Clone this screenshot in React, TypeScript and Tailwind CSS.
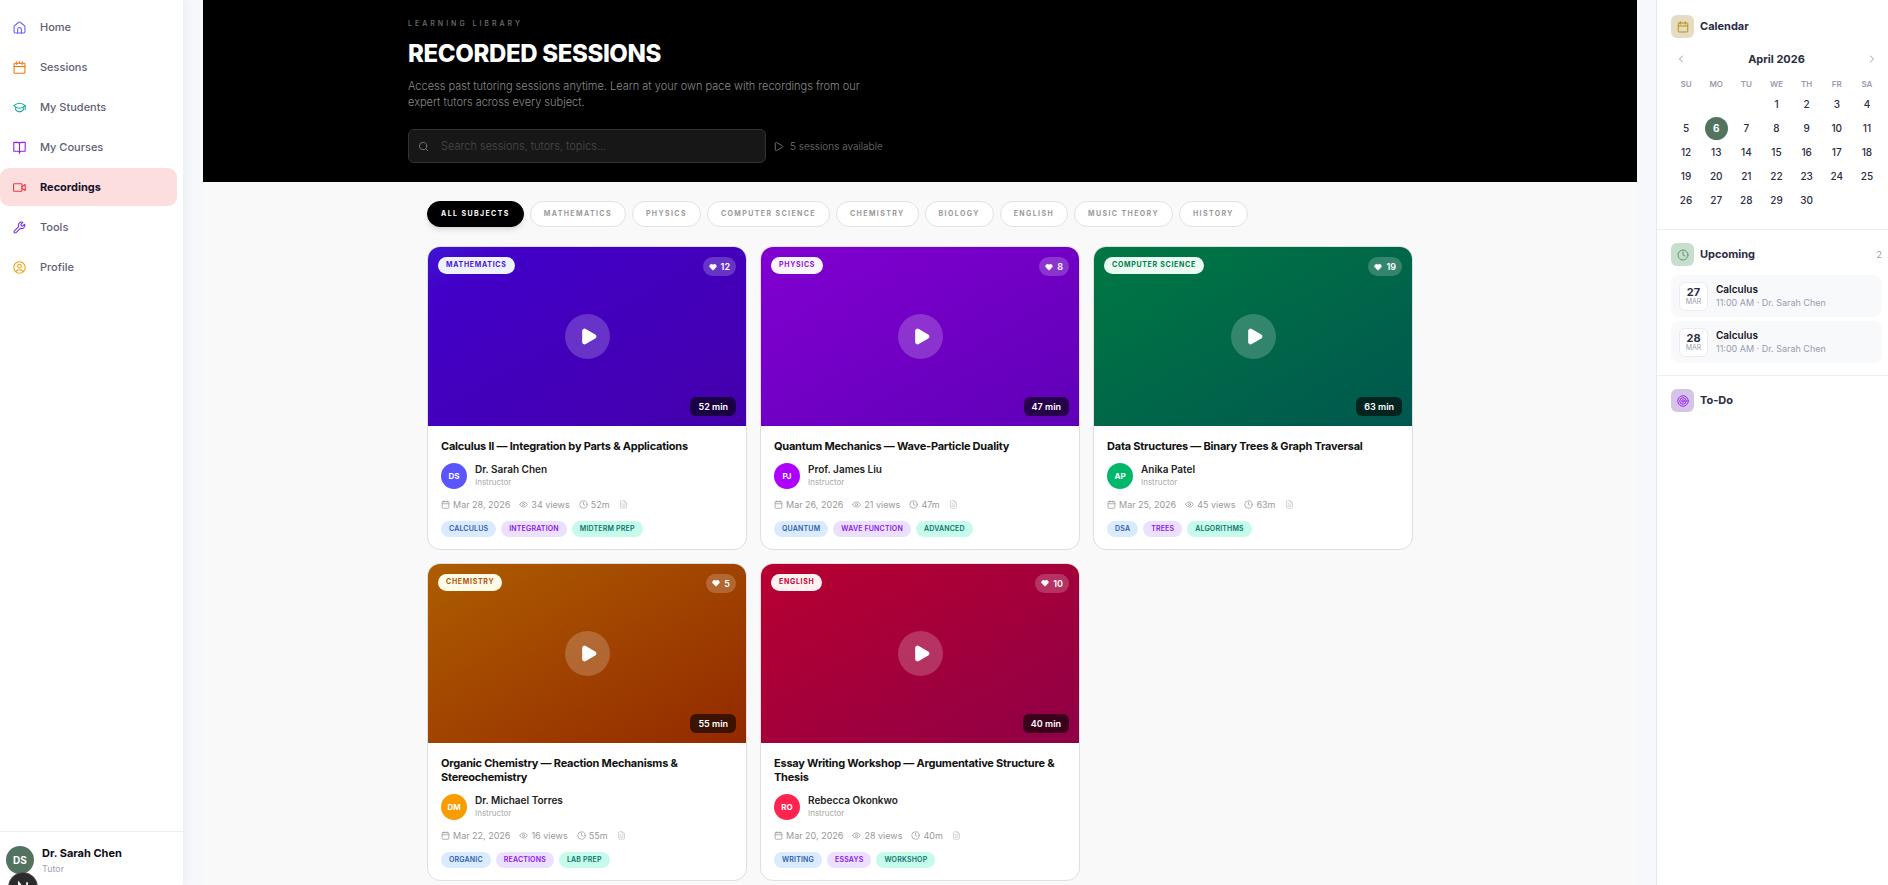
import { useState, type ReactNode } from "react";
import {
  Calendar,
  ChevronLeft,
  ChevronRight,
  Clock,
  Eye,
  FileText,
  Heart,
  Play,
  Search,
  Wrench,
} from "lucide-react";
import clsx from "clsx";

const LineIcon = ({ size = 13, children }: { size?: number; children: ReactNode }) => (
  <svg
    width={size}
    height={size}
    viewBox="0 0 24 24"
    fill="none"
    stroke="currentColor"
    strokeWidth={2}
    strokeLinecap="round"
    strokeLinejoin="round"
    aria-hidden="true"
  >
    {children}
  </svg>
);

const navItems = [
  {
    name: "Home",
    color: "text-[#615fff]",
    icon: (
      <LineIcon>
        <path d="M2 9.500 10 2.700a3 3 0 0 1 4 0L22 9.500V20a2 2 0 0 1-2 2H4a2 2 0 0 1-2-2z" />
        <path d="M8.500 22v-6.500a3.500 3.500 0 0 1 7 0V22" />
      </LineIcon>
    ),
  },
  {
    name: "Sessions",
    color: "text-[#f5740a]",
    icon: (
      <LineIcon>
        <rect x="2" y="4" width="20" height="18.500" rx="1.500" />
        <path d="M2 10h20M7 1.500v5M17 1.500v5M12 1.500v2.500" />
      </LineIcon>
    ),
  },
  {
    name: "My Students",
    color: "text-[#14a898]",
    icon: (
      <LineIcon>
        <path d="M1.500 8.500C5 5.500 8.500 4 12 4s7 1.500 10.500 4.500C19 11.500 15.500 13.500 12 13.500S5 11.500 1.500 8.500z" />
        <path d="M5 12v4.500c2 2.500 4.500 3.500 7 3.500s5-1 7-3.500V12" />
        <path d="M22.500 8.500V16" />
      </LineIcon>
    ),
  },
  {
    name: "My Courses",
    color: "text-[#8f22f0]",
    icon: (
      <LineIcon>
        <path d="M12 5v17" />
        <path d="M1.500 2.500H9a3 3 0 0 1 3 3 3 3 0 0 1 3-3h7.500v16.500H15a3 3 0 0 0-3 3 3 3 0 0 0-3-3H1.500z" />
      </LineIcon>
    ),
  },
  {
    name: "Recordings",
    color: "text-[#ea3b3b]",
    icon: (
      <LineIcon>
        <rect x="1" y="5" width="15.500" height="14" rx="1.500" />
        <path d="m16.500 10.500 6-4v11l-6-4" />
      </LineIcon>
    ),
  },
  { name: "Tools", color: "text-[#7530e8]", icon: <Wrench size={13} /> },
  {
    name: "Profile",
    color: "text-[#eaa30c]",
    icon: (
      <LineIcon>
        <circle cx="12" cy="12" r="10.500" />
        <circle cx="12" cy="9.500" r="3.500" />
        <path d="M5.500 19.500c1-2.500 3-3.500 6.500-3.500s5.500 1 6.500 3.500" />
      </LineIcon>
    ),
  },
];

const subjects = [
  "All Subjects",
  "Mathematics",
  "Physics",
  "Computer Science",
  "Chemistry",
  "Biology",
  "English",
  "Music Theory",
  "History",
];

const sessions = [
  {
    title: "Calculus II — Integration by Parts & Applications",
    subject: "Mathematics",
    tutor: "Dr. Sarah Chen",
    initials: "DS",
    date: "Mar 28, 2026",
    views: 34,
    minutes: 52,
    likes: 12,
    tags: ["Calculus", "Integration", "Midterm Prep"],
    thumb: "bg-[linear-gradient(150deg,#4015d4_0%,#4200c8_14%,#4300b8_60%,#4500ab_100%)]",
    badge: "bg-[#eef2ff] text-[#4a12d8]",
    avatar: "bg-[#5b55ff]",
  },
  {
    title: "Quantum Mechanics — Wave-Particle Duality",
    subject: "Physics",
    tutor: "Prof. James Liu",
    initials: "PJ",
    date: "Mar 26, 2026",
    views: 21,
    minutes: 47,
    likes: 8,
    tags: ["Quantum", "Wave Function", "Advanced"],
    thumb: "bg-[linear-gradient(150deg,#8200d0,#5f00b8)]",
    badge: "bg-[#faf5ff] text-[#8a0fdb]",
    avatar: "bg-[#ad00ff]",
  },
  {
    title: "Data Structures — Binary Trees & Graph Traversal",
    subject: "Computer Science",
    tutor: "Anika Patel",
    initials: "AP",
    date: "Mar 25, 2026",
    views: 45,
    minutes: 63,
    likes: 19,
    tags: ["DSA", "Trees", "Algorithms"],
    thumb: "bg-[linear-gradient(150deg,#007842,#00574f)]",
    badge: "bg-[#e9fdf2] text-[#007a4d]",
    avatar: "bg-[#00b869]",
  },
  {
    title: "Organic Chemistry — Reaction Mechanisms & Stereochemistry",
    subject: "Chemistry",
    tutor: "Dr. Michael Torres",
    initials: "DM",
    date: "Mar 22, 2026",
    views: 16,
    minutes: 55,
    likes: 5,
    tags: ["Organic", "Reactions", "Lab Prep"],
    thumb: "bg-[linear-gradient(150deg,#ad5d00,#932900)]",
    badge: "bg-[#fffbe6] text-[#b4530a]",
    avatar: "bg-[#f89c00]",
  },
  {
    title: "Essay Writing Workshop — Argumentative Structure & Thesis",
    subject: "English",
    tutor: "Rebecca Okonkwo",
    initials: "RO",
    date: "Mar 20, 2026",
    views: 28,
    minutes: 40,
    likes: 10,
    tags: ["Writing", "Essays", "Workshop"],
    thumb: "bg-[linear-gradient(150deg,#b80030,#8f0046)]",
    badge: "bg-[#fff1f2] text-[#c70036]",
    avatar: "bg-[#ff2350]",
  },
];

const tagColors = [
  "bg-[#dbebff] text-[#2f5fae]",
  "bg-[#ebe1fe] text-[#8b14ee]",
  "bg-[#c6fbec] text-[#0b756b]",
];

const weekDays = ["SU", "MO", "TU", "WE", "TH", "FR", "SA"];
const weeks = [
  [null, null, null, 1, 2, 3, 4],
  [5, 6, 7, 8, 9, 10, 11],
  [12, 13, 14, 15, 16, 17, 18],
  [19, 20, 21, 22, 23, 24, 25],
  [26, 27, 28, 29, 30, null, null],
];

const upcoming = [
  { day: 27, month: "MAR", title: "Calculus", info: "11:00 AM · Dr. Sarah Chen" },
  { day: 28, month: "MAR", title: "Calculus", info: "11:00 AM · Dr. Sarah Chen" },
];

const Sidebar = () => (
  <aside className="relative z-10 flex w-[183px] shrink-0 flex-col bg-white shadow-[0_0_12px_rgba(30,40,90,0.08)]">
    <nav className="flex flex-1 flex-col gap-0.5 pt-2 pr-1.5">
      {navItems.map((item) => {
        const active = item.name === "Recordings";
        return (
          <a
            key={item.name}
            href="#"
            className={clsx(
              "flex h-[38px] items-center gap-3.5 rounded-[9px] pl-[13px] text-[11px]",
              active ? "bg-[#fcdede] font-bold text-[#12122a]" : "font-medium text-[#5f6077]"
            )}
          >
            <span className={item.color}>{item.icon}</span>
            {item.name}
          </a>
        );
      })}
    </nav>
    <div className="flex h-[54px] items-start gap-2 border-t border-[#efeff2] pt-3.5 pl-1.5">
      <div className="flex size-7 items-center justify-center rounded-full bg-[#52735f] text-[10px] font-bold text-white">
        DS
      </div>
      <div>
        <div className="text-[11px] leading-[14px] font-bold text-[#0c0c16]">Dr. Sarah Chen</div>
        <div className="text-[9px] leading-[18px] text-[#a0a1b5]">Tutor</div>
      </div>
    </div>
  </aside>
);

const SessionCard = ({ session }: { session: (typeof sessions)[number] }) => (
  <article className="overflow-hidden rounded-[13px] border border-[#dfdfdf] bg-white">
    <div className={clsx("relative flex aspect-video items-center justify-center", session.thumb)}>
      <span
        className={clsx(
          "absolute top-2.5 left-2.5 h-[17px] rounded-full px-2 text-[7px] leading-[15px] font-bold tracking-widest uppercase",
          session.badge
        )}
      >
        {session.subject}
      </span>
      <button
        aria-label="Like"
        className="absolute top-2.5 right-2.5 flex h-[19px] items-center gap-1 rounded-full bg-white/20 px-1.5 text-[9px] font-semibold text-white"
      >
        <Heart size={8} fill="currentColor" />
        {session.likes}
      </button>
      <button
        aria-label="Play"
        className="flex size-[45px] items-center justify-center rounded-full bg-white/20 pl-0.5 text-white"
      >
        <Play size={19} fill="currentColor" />
      </button>
      <span className="absolute right-2.5 bottom-2.5 h-[19px] rounded-md bg-black/60 px-2 text-[9px] leading-[19px] font-semibold text-white">
        {session.minutes} min
      </span>
    </div>
    <div className="px-[13px] pt-[13px] pb-3">
      <h3 className="text-[11px] leading-[14px] font-bold tracking-[-0.02em] text-[#111]">{session.title}</h3>
      <div className="mt-2.5 flex items-center gap-2">
        <div
          className={clsx(
            "flex size-[26px] items-center justify-center rounded-full text-[8px] font-bold text-white",
            session.avatar
          )}
        >
          {session.initials}
        </div>
        <div>
          <div className="text-[10px] leading-3 font-semibold text-[#222]">{session.tutor}</div>
          <div className="text-[8px] leading-[14px] text-[#a8a8a8]">Instructor</div>
        </div>
      </div>
      <div className="mt-2.5 flex h-3 items-center gap-[9px] text-[9px] text-[#999]">
        <span className="flex items-center gap-[3px]">
          <Calendar size={9} />
          {session.date}
        </span>
        <span className="flex items-center gap-[3px]">
          <Eye size={9} />
          {session.views} views
        </span>
        <span className="flex items-center gap-[3px]">
          <Clock size={9} />
          {session.minutes}m
        </span>
        <FileText size={9} className="text-[#c8c8c8]" />
      </div>
      <div className="mt-2.5 flex gap-[5px]">
        {session.tags.map((tag, i) => (
          <span
            key={tag}
            className={clsx(
              "h-4 rounded-full px-2 text-[7px] leading-[15px] font-semibold tracking-wide uppercase",
              tagColors[i]
            )}
          >
            {tag}
          </span>
        ))}
      </div>
    </div>
  </article>
);

const PanelTitle = ({ tile, icon, title }: { tile: string; icon: ReactNode; title: string }) => (
  <div className="flex items-center gap-1.5">
    <span className={clsx("flex size-[23px] items-center justify-center rounded-md", tile)}>{icon}</span>
    <h2 className="text-[11px] font-bold text-[#2b2c42]">{title}</h2>
  </div>
);

const RightPanel = () => (
  <aside className="w-[232px] shrink-0 border-l border-[#e9eaef] bg-white text-[#2b2c42]">
    <section className="pt-[15px] pr-1.5 pb-[17px] pl-3.5">
      <PanelTitle
        tile="bg-[#e6dcc3] text-[#b8930f]"
        icon={
          <LineIcon size={12}>
            <rect x="2.500" y="4" width="19" height="18" rx="1.500" />
            <path d="M2.500 10h19M7.500 1.500v5M16.500 1.500v5" />
          </LineIcon>
        }
        title="Calendar"
      />
      <div className="mt-[11px] flex h-5 items-center justify-between px-1">
        <button aria-label="Previous month" className="text-[#9a9bb0]">
          <ChevronLeft size={12} />
        </button>
        <span className="text-[11px] font-bold">April 2026</span>
        <button aria-label="Next month" className="text-[#9a9bb0]">
          <ChevronRight size={12} />
        </button>
      </div>
      <table className="mt-1.5 w-full table-fixed text-center">
        <thead>
          <tr className="h-[17px] text-[8px] leading-3 text-[#9a9bb0]">
            {weekDays.map((d) => (
              <th key={d} className="p-0 font-semibold">
                {d}
              </th>
            ))}
          </tr>
        </thead>
        <tbody className="text-[10px] font-medium">
          {weeks.map((week, i) => (
            <tr key={i}>
              {week.map((day, j) => (
                <td key={j} className="h-6 p-0">
                  {day === 6 ? (
                    <span className="mx-auto flex size-[23px] items-center justify-center rounded-full bg-[#52735f] font-bold text-white">
                      {day}
                    </span>
                  ) : (
                    day
                  )}
                </td>
              ))}
            </tr>
          ))}
        </tbody>
      </table>
    </section>
    <section className="border-t border-[#efeff2] pt-[13px] pr-1.5 pb-3 pl-3.5">
      <div className="flex items-center justify-between">
        <PanelTitle tile="bg-[#c6dfcd] text-[#6b8f78]" icon={<Clock size={12} />} title="Upcoming" />
        <span className="text-[9px] text-[#9a9bb0]">{upcoming.length}</span>
      </div>
      <ul className="mt-[9px] flex flex-col gap-1">
        {upcoming.map((item) => (
          <li key={item.day} className="flex h-[42px] items-center gap-2 rounded-lg bg-[#f8f9fb] px-2">
            <div className="flex size-[29px] flex-col items-center justify-center rounded-md border border-[#ececf0] bg-white">
              <span className="text-[11px] leading-[11px] font-bold">{item.day}</span>
              <span className="text-[7px] leading-[8px] text-[#9a9bb0]">{item.month}</span>
            </div>
            <div>
              <div className="text-[10px] leading-[14px] font-semibold text-[#12121c]">{item.title}</div>
              <div className="text-[9px] leading-[14px] text-[#9a9bb0]">{item.info}</div>
            </div>
          </li>
        ))}
      </ul>
    </section>
    <section className="border-t border-[#efeff2] py-[13px] pr-1.5 pl-3.5">
      <PanelTitle
        tile="bg-[#d5c3e8] text-[#9a2cf0]"
        icon={
          <LineIcon size={12}>
            <circle cx="12" cy="12" r="10.500" />
            <circle cx="12" cy="12" r="6.500" />
            <circle cx="12" cy="12" r="2.500" />
          </LineIcon>
        }
        title="To-Do"
      />
    </section>
  </aside>
);

export default function App() {
  const [query, setQuery] = useState("");
  const [subject, setSubject] = useState("All Subjects");

  return (
    <div className="flex h-screen overflow-hidden bg-[#f6f8fc] font-[Inter,sans-serif]">
      <Sidebar />
      <main className="mr-[19px] ml-5 min-w-0 flex-1 overflow-y-auto bg-[#f9f9f9] [scrollbar-width:none]">
        <header className="bg-black pt-[18px] pb-[19px]">
          <div className="mx-auto max-w-[1024px]">
            <p className="text-[7px] leading-3 font-semibold tracking-[3px] text-[#666] uppercase">Learning Library</p>
            <h1 className="mt-[9px] text-[24px] leading-[29px] font-extrabold tracking-[-0.015em] text-white uppercase">
              Recorded Sessions
            </h1>
            <p className="mt-2.5 max-w-[460px] text-[11px] leading-4 font-light text-[#8a8a8a]">
              Access past tutoring sessions anytime. Learn at your own pace with recordings from our expert tutors
              across every subject.
            </p>
            <div className="mt-[19px] flex items-center gap-[7px]">
              <div className="relative w-[358px]">
                <Search size={11} className="absolute top-3 left-2.5 text-[#777]" />
                <input
                  type="text"
                  aria-label="Search sessions"
                  value={query}
                  onChange={(e) => setQuery(e.target.value)}
                  placeholder="Search sessions, tutors, topics..."
                  className="block h-[34px] w-full rounded-md border border-[#333] bg-[#171717] pr-3 pl-8 text-[11px] font-light text-white placeholder:text-[#4a4a4a]"
                />
              </div>
              <span className="flex items-center gap-1.5 text-[10px] font-light text-[#777]">
                <Play size={11} />
                {sessions.length} sessions available
              </span>
            </div>
          </div>
        </header>
        <div className="mx-auto max-w-[1024px] p-[19px]">
          <div className="flex gap-1.5">
            {subjects.map((s) => (
              <button
                key={s}
                onClick={() => setSubject(s)}
                className={clsx(
                  "h-[26px] rounded-full border px-[13px] text-[7px] font-bold tracking-[0.2em] uppercase",
                  s === subject
                    ? "border-black bg-black text-white shadow-md"
                    : "border-[#e2e2e2] bg-white text-[#999]"
                )}
              >
                {s}
              </button>
            ))}
          </div>
          <div className="mt-[19px] grid grid-cols-3 gap-[13px]">
            {sessions.map((s) => (
              <SessionCard key={s.title} session={s} />
            ))}
          </div>
        </div>
      </main>
      <RightPanel />
      <button
        aria-label="Open dev tools"
        className="fixed -bottom-[17px] left-2 z-20 flex size-[30px] items-center justify-center rounded-full border border-[#555] bg-[#2b2b2b] text-white"
      >
        <svg width="14" height="14" viewBox="0 0 12 12" fill="none" stroke="currentColor" strokeWidth="1.5">
          <path d="M2.500 10V2.500L10 12M9.500 2v6" />
        </svg>
      </button>
    </div>
  );
}
